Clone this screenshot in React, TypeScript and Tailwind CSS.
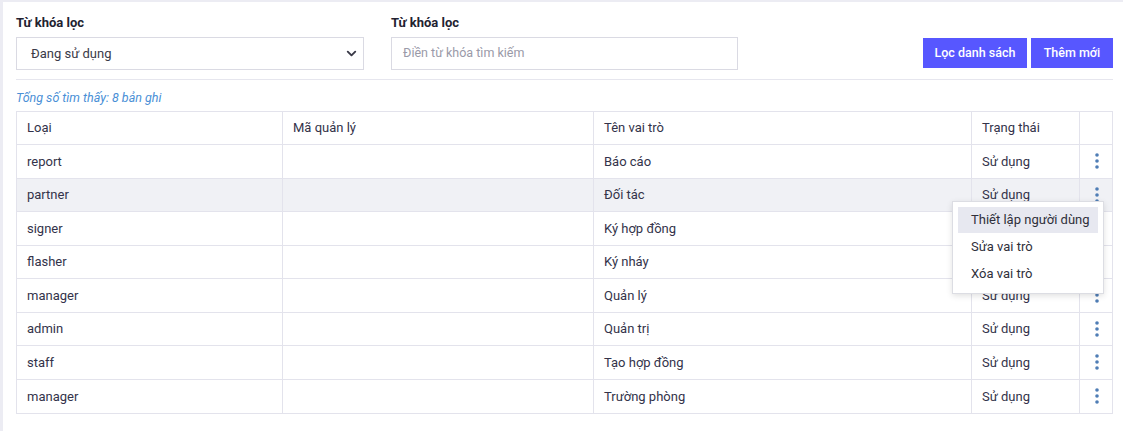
import { ChevronDown } from 'lucide-react'

// ═══════════════════════════════════════════════════════════════════
// DATA
// ═══════════════════════════════════════════════════════════════════
const ROWS = [
  { type: 'report',  code: '', name: 'Báo cáo',      status: 'Sử dụng' },
  { type: 'partner', code: '', name: 'Đối tác',      status: 'Sử dụng' },
  { type: 'signer',  code: '', name: 'Ký hợp đồng',  status: 'Sử dụng' },
  { type: 'flasher', code: '', name: 'Ký nháy',      status: 'Sử dụng' },
  { type: 'manager', code: '', name: 'Quản lý',      status: 'Sử dụng' },
  { type: 'admin',   code: '', name: 'Quản trị',     status: 'Sử dụng' },
  { type: 'staff',   code: '', name: 'Tạo hợp đồng', status: 'Sử dụng' },
  { type: 'manager', code: '', name: 'Trường phòng', status: 'Sử dụng' },
]

function Dots() {
  return (
    <svg width="4" height="16" viewBox="0 0 4 16" className="text-[#4f7db5]">
      <circle cx="2" cy="2" r="1.8" fill="currentColor" />
      <circle cx="2" cy="8" r="1.8" fill="currentColor" />
      <circle cx="2" cy="14" r="1.8" fill="currentColor" />
    </svg>
  )
}

// ═══════════════════════════════════════════════════════════════════
// ROW MENU
// ═══════════════════════════════════════════════════════════════════
function RowMenu() {
  return (
    <div className="absolute left-[-128px] top-[22px] z-10 w-[152px] bg-white border border-[#dcdde3] shadow-[0_2px_6px_rgba(0,0,0,0.12)] p-[5px] text-[13px] text-[#2f2f3a] whitespace-nowrap">
      <div className="h-[26px] px-[13px] flex items-center bg-[#e7e8f0]">Thiết lập người dùng</div>
      <div className="h-[28px] px-[13px] flex items-center">Sửa vai trò</div>
      <div className="h-[27px] px-[13px] flex items-center">Xóa vai trò</div>
    </div>
  )
}

export default function App() {
  return (
    <div className="w-[1123px] h-[431px] bg-white border-t-2 border-l-[3px] border-[#ececf3] pl-[13px] pr-[10px] font-['Roboto','Liberation_Sans',sans-serif] text-[13px] text-[#33334a]">
      {/* FILTERS */}
      <div className="flex items-end pt-[13px] pb-[9px] border-b border-[#e6e6ee]">
        <div className="w-[348px]">
          <p className="font-bold text-[#222230] mb-[7px] leading-[15px]">Từ khóa lọc</p>
          <div className="h-[33px] border border-[#dadae3] flex items-center justify-between pl-[14px] pr-[4px]">
            <span className="text-[#3a3a48]">Đang sử dụng</span>
            <ChevronDown size={15} strokeWidth={3} className="text-[#3a3a48]" />
          </div>
        </div>
        <div className="w-[347px] ml-[27px]">
          <p className="font-bold text-[#222230] mb-[7px] leading-[15px]">Từ khóa lọc</p>
          <div className="h-[33px] border border-[#dadae3] flex items-center pl-[11px]">
            <span className="text-[#9a9aa8] text-[12.5px]">Điền từ khóa tìm kiếm</span>
          </div>
        </div>
        <div className="ml-auto flex gap-[4px] mb-[2px]">
          <button className="h-[30px] w-[104px] bg-[#5757ff] text-white text-[12.5px] font-medium">Lọc danh sách</button>
          <button className="h-[30px] w-[82px] bg-[#5757ff] text-white text-[12.5px] font-medium">Thêm mới</button>
        </div>
      </div>

      {/* TOTAL */}
      <p className="italic text-[#4a8fd6] text-[12.5px] pt-[10px] pb-[5px] leading-[16px]">Tổng số tìm thấy: 8 bản ghi</p>

      {/* TABLE */}
      <div className="w-[1097px] border border-[#e3e3ec]">
        <div className="grid grid-cols-[266px_311px_378px_108px_1fr] h-[33px] border-b border-[#e3e3ec]">
          <div className="px-[10px] flex items-center border-r border-[#e3e3ec]">Loại</div>
          <div className="px-[10px] flex items-center border-r border-[#e3e3ec]">Mã quản lý</div>
          <div className="px-[10px] flex items-center border-r border-[#e3e3ec]">Tên vai trò</div>
          <div className="px-[10px] flex items-center border-r border-[#e3e3ec]">Trạng thái</div>
          <div />
        </div>
        {ROWS.map((r, i) => (
          <div
            key={i}
            className={`grid grid-cols-[266px_311px_378px_108px_1fr] h-[33.5px] ${i < ROWS.length - 1 ? 'border-b border-[#e3e3ec]' : ''} ${i === 1 ? 'bg-[#f0f1f5]' : ''}`}
          >
            <div className="px-[10px] flex items-center border-r border-[#e3e3ec]">{r.type}</div>
            <div className="px-[10px] flex items-center border-r border-[#e3e3ec]">{r.code}</div>
            <div className="px-[10px] flex items-center border-r border-[#e3e3ec]">{r.name}</div>
            <div className="px-[10px] flex items-center border-r border-[#e3e3ec]">{r.status}</div>
            <div className="relative flex items-center justify-center pl-[1px]">
              <Dots />
              {i === 1 && <RowMenu />}
            </div>
          </div>
        ))}
      </div>
    </div>
  )
}
